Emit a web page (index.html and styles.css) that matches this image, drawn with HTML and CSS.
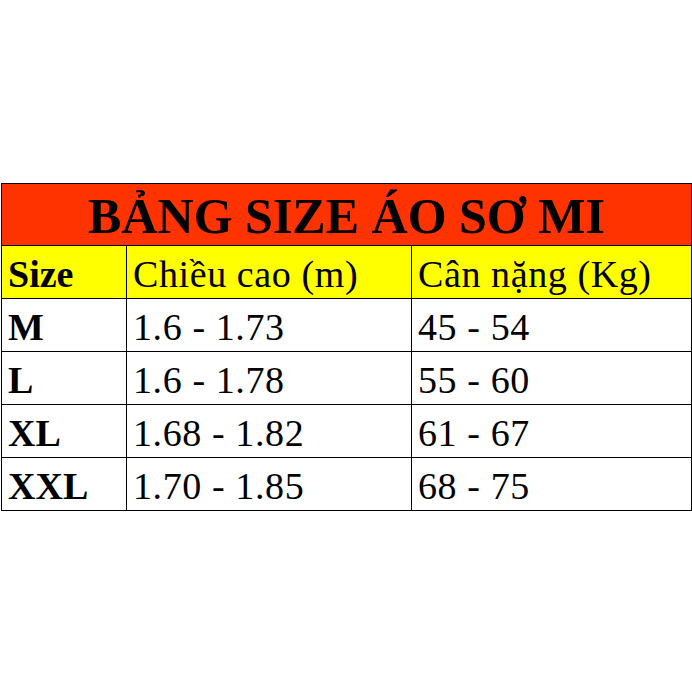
FILE: index.html
```html
<!DOCTYPE html>
<html lang="vi">
<head>
<meta charset="utf-8">
<title>Bảng size áo sơ mi</title>
<link rel="stylesheet" href="styles.css">
</head>
<body>
<div class="page">
  <table class="size-table">
    <colgroup>
      <col class="c1"><col class="c2"><col class="c3">
    </colgroup>
    <tr class="title-row"><td colspan="3">BẢNG SIZE ÁO SƠ MI</td></tr>
    <tr class="head-row"><td class="bold">Size</td><td>Chiều cao (m)</td><td>Cân nặng (Kg)</td></tr>
    <tr><td class="bold">M</td><td>1.6 - 1.73</td><td>45 - 54</td></tr>
    <tr><td class="bold">L</td><td>1.6 - 1.78</td><td>55 - 60</td></tr>
    <tr><td class="bold">XL</td><td>1.68 - 1.82</td><td>61 - 67</td></tr>
    <tr><td class="bold">XXL</td><td>1.70 - 1.85</td><td>68 - 75</td></tr>
  </table>
</div>
</body>
</html>
```

FILE: styles.css
```css
html, body {
  margin: 0;
  padding: 0;
  background: #ffffff;
}
.page {
  width: 692px;
  height: 692px;
  padding: 183px 0 0 1px;
  box-sizing: border-box;
}
.size-table {
  border-collapse: collapse;
  table-layout: fixed;
  width: 690px;
  font-family: "Liberation Serif", "Times New Roman", serif;
  color: #000;
}
.c1 { width: 125px; }
.c2 { width: 285px; }
.c3 { width: 280px; }
.size-table td {
  border: 1px solid #000;
  padding: 4px 0 0 6px;
  font-size: 38px;
  letter-spacing: 0.6px;
  line-height: 1;
  height: 53px;
  box-sizing: border-box;
  white-space: nowrap;
  vertical-align: middle;
}
.size-table td.bold {
  font-weight: bold;
  letter-spacing: 0;
}
.title-row td {
  background: #ff3300;
  text-align: center;
  font-weight: bold;
  font-size: 50px;
  letter-spacing: 0;
  height: 62px;
  padding: 2px 0 0 0;
}
.head-row td {
  background: #ffff00;
}
```
